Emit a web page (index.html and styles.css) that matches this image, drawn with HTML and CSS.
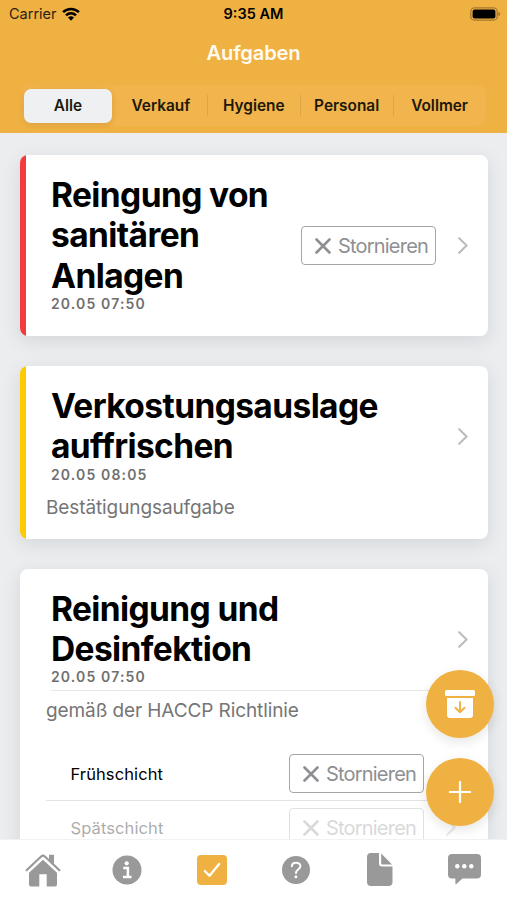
FILE: index.html
```html
<!DOCTYPE html>
<html lang="de">
<head>
<meta charset="UTF-8">
<meta name="viewport" content="width=device-width, initial-scale=1.0">
<title>Aufgaben</title>
<link rel="stylesheet" href="styles.css">
</head>
<body>
<!-- shared icons -->
<svg class="defs" width="0" height="0">
  <symbol id="cross" viewBox="0 0 16 16"><path d="M1.5 1.5L14.5 14.5M14.5 1.5L1.5 14.5" fill="none" stroke="currentColor" stroke-width="2.6" stroke-linecap="round"/></symbol>
  <symbol id="chevron" viewBox="0 0 10 17"><path d="M1.2 1.2L8.6 8.5L1.2 15.8" fill="none" stroke="currentColor" stroke-width="2.1" stroke-linecap="round" stroke-linejoin="round"/></symbol>
</svg>

<div class="app">
  <header class="header">
    <div class="status">
      <div class="carrier">Carrier
        <svg width="18" height="14" viewBox="0 0 18 14"><path d="M1.1 5.2a11.2 11.2 0 0 1 15.8 0M4 8.3a7.1 7.1 0 0 1 10 0" fill="none" stroke="#000" stroke-width="2.5"/><path d="M9 13.8l-3-3.2a4.3 4.3 0 0 1 6 0z"/></svg>
      </div>
      <div class="time">9:35 AM</div>
      <div class="battery">
        <svg width="31" height="14" viewBox="0 0 31 14"><rect x=".8" y=".8" width="26.4" height="12.4" rx="3.8" fill="none" stroke="#a67a2e" stroke-width="1.3"/><rect x="2.6" y="2.6" width="22.8" height="8.8" rx="2"/><path d="M28.4 4.8q2 .7 2 2.2t-2 2.2z" fill="#a67a2e"/></svg>
      </div>
    </div>
    <h1 class="title">Aufgaben</h1>
    <nav class="segments">
      <a class="segment active"><span>Alle</span></a>
      <a class="segment"><span>Verkauf</span></a>
      <a class="segment line"><span>Hygiene</span></a>
      <a class="segment line"><span>Personal</span></a>
      <a class="segment line"><span>Vollmer</span></a>
    </nav>
  </header>

  <main class="content">
    <article class="card red">
      <div class="head">
        <div class="label">
          <h2>Reingung von<br>sanitären<br>Anlagen</h2>
          <p class="date">20.05 07:50</p>
        </div>
        <button class="cancel"><svg width="16" height="16"><use href="#cross"/></svg><span>Stornieren</span></button>
        <svg class="chevron" width="10" height="17"><use href="#chevron"/></svg>
      </div>
    </article>

    <article class="card yellow">
      <div class="head">
        <div class="label">
          <h2>Verkostungsauslage<br>auffrischen</h2>
          <p class="date">20.05 08:05</p>
        </div>
        <svg class="chevron" width="10" height="17"><use href="#chevron"/></svg>
      </div>
      <p class="desc">Bestätigungsaufgabe</p>
    </article>

    <article class="card">
      <div class="head bordered">
        <div class="label">
          <h2>Reinigung und<br>Desinfektion</h2>
          <p class="date">20.05 07:50</p>
        </div>
        <svg class="chevron" width="10" height="17"><use href="#chevron"/></svg>
      </div>
      <p class="desc">gemäß der HACCP Richtlinie</p>
      <ul class="shifts">
        <li class="shift">
          <span class="name">Frühschicht</span>
          <button class="cancel"><svg width="16" height="16"><use href="#cross"/></svg><span>Stornieren</span></button>
          <svg class="chevron" width="10" height="17"><use href="#chevron"/></svg>
        </li>
        <li class="shift disabled">
          <span class="name">Spätschicht</span>
          <button class="cancel"><svg width="16" height="16"><use href="#cross"/></svg><span>Stornieren</span></button>
          <svg class="chevron" width="10" height="17"><use href="#chevron"/></svg>
        </li>
      </ul>
    </article>
  </main>

  <div class="fabs">
    <button class="fab">
      <svg width="30" height="28" viewBox="0 0 30 28" fill="#fff"><rect width="30" height="6" rx="1.5"/><path d="M2 8h26v17a3 3 0 0 1-3 3H5a3 3 0 0 1-3-3z"/><path d="M15 12v10.2M10.4 17.8L15 22.3L19.6 17.8" fill="none" stroke="#f0b143" stroke-width="1.9" stroke-linecap="round" stroke-linejoin="round"/></svg>
    </button>
    <button class="fab">
      <svg width="22" height="22" viewBox="0 0 22 22"><path d="M11 .8V21.2M.8 11H21.2" stroke="#fff" stroke-width="2.2" stroke-linecap="round"/></svg>
    </button>
  </div>

  <footer class="tabs">
    <a class="tab"><svg width="36" height="34" viewBox="0 0 36 34" fill="#999"><path d="M1.6 17.2L16.4 3.3Q18 1.9 19.6 3.3L34.4 17.2" fill="none" stroke="#999" stroke-width="2.2" stroke-linecap="round"/><path d="M24 1.8h5v9.4l-5-4.7z"/><path d="M18 6.8L32 19.7V31.5a2 2 0 0 1-2 2H21.7V21.3H14.3V33.5H6a2 2 0 0 1-2-2V19.7z"/></svg></a>
    <a class="tab"><svg width="30" height="30" viewBox="0 0 30 30"><circle cx="15" cy="15" r="14.5" fill="#999"/><circle cx="14.7" cy="8.3" r="2.1" fill="#fff"/><path d="M11.3 13.1H15.9V21.7M11 21.9H19.5" fill="none" stroke="#fff" stroke-width="2.5"/></svg></a>
    <a class="tab"><svg width="30" height="30" viewBox="0 0 30 30"><rect width="30" height="30" rx="4" fill="#f0b143"/><path d="M7.8 16L12.5 20.7L22.2 9" fill="none" stroke="#fff" stroke-width="2.3" stroke-linecap="round" stroke-linejoin="round"/></svg></a>
    <a class="tab"><svg width="28" height="28" viewBox="0 0 28 28"><circle cx="14" cy="14" r="14" fill="#999"/><path d="M9.8 10.2C10 7.7 11.8 6.7 14 6.7C16.5 6.7 18.4 8.1 18.4 10.3C18.4 13.3 14 13.2 14 17" fill="none" stroke="#fff" stroke-width="2" stroke-linecap="round"/><circle cx="13.9" cy="20.8" r="1.5" fill="#fff"/></svg></a>
    <a class="tab"><svg width="26" height="33" viewBox="0 0 26 33" fill="#999"><path d="M4 0H12V10.5a3 3 0 0 0 3 3H25.5V29a4 4 0 0 1-4 4H4a4 4 0 0 1-4-4V4a4 4 0 0 1 4-4z"/><path d="M14.2 .5L25 11.5H15.4a1.2 1.2 0 0 1-1.2-1.2z"/></svg></a>
    <a class="tab"><svg width="33" height="31" viewBox="0 0 33 31"><path d="M4 0H29a4 4 0 0 1 4 4V20.5a4 4 0 0 1-4 4H14.5L8 30.2Q7.4 30.6 7.4 29.9V24.5H4a4 4 0 0 1-4-4V4a4 4 0 0 1 4-4z" fill="#999"/><g fill="#fff"><circle cx="9.3" cy="12.3" r="2.2"/><circle cx="16.3" cy="12.3" r="2.2"/><circle cx="23.3" cy="12.3" r="2.2"/></g></svg></a>
  </footer>
</div>
</body>
</html>
```
FILE: styles.css
```css
* {
  box-sizing: border-box;
}
body {
  margin: 0;
  font-family: Inter, "Liberation Sans", sans-serif;
  color: #000;
}
h1, h2, p, ul {
  margin: 0;
  padding: 0;
}
svg {
  display: block;
  flex: none;
}
button {
  font-family: inherit;
  padding: 0;
}
.defs {
  position: absolute;
}
.app {
  position: relative;
  display: flex;
  flex-direction: column;
  width: 507px;
  height: 900px;
  overflow: hidden;
  background: #ebedef;
}

/* header */
.header {
  flex: none;
  height: 133px;
  background: #f0b143;
}
.status {
  display: flex;
  align-items: center;
  height: 27px;
  padding: 0 6px 0 9px;
  font-size: 14.5px;
}
.carrier, .battery {
  flex: 1;
  display: flex;
  align-items: center;
  gap: 5px;
}
.carrier {
  color: #2b2112;
}
.battery {
  justify-content: flex-end;
}
.time {
  margin-left: -3px;
  font-weight: 600;
}
.title {
  height: 50px;
  line-height: 51px;
  text-align: center;
  font-size: 20.2px;
  font-weight: 600;
  letter-spacing: -.2px;
  color: #fffaf0;
}
.segments {
  display: flex;
  height: 41px;
  margin: 8px 21px 0 21.5px;
  border-radius: 8px;
  background: #f2b44c;
}
.segment {
  flex: 1;
  display: flex;
  padding: 4px 2.5px 3px;
  font-size: 15.4px;
  font-weight: 600;
  color: #20180a;
}
.segment span {
  flex: 1;
  line-height: 33px;
  text-align: center;
}
.segment.line {
  background: linear-gradient(#dda344, #dda344) 0 10px / 1px 21px no-repeat;
}
.segment.active span {
  border-radius: 7px;
  background: #eff0f1;
  box-shadow: 0 2px 6px rgba(120, 80, 0, .2);
}

/* task cards */
.content {
  flex: 1;
  min-height: 0;
  overflow: hidden;
  display: flex;
  flex-direction: column;
  gap: 29.5px;
  padding: 22px 19.5px 0 20.4px;
}
.card {
  flex: none;
  padding: 20px 19.5px 19.5px 25.6px;
  border-radius: 8px;
  background: #fff;
  box-shadow: 0 5px 18px rgba(60, 70, 80, .13);
}
.red {
  background: linear-gradient(90deg, #f33b3f 6.5px, #fff 6.5px);
}
.yellow {
  background: linear-gradient(90deg, #fdcb00 6.5px, #fff 6.5px);
}
.head {
  display: flex;
  align-items: center;
  margin-left: 5px;
}
.bordered {
  margin-right: -19.5px;
  padding-right: 19.5px;
  border-bottom: 1px solid #e8e8e8;
}
.label {
  flex: 1;
  padding-bottom: 5px;
}
.label h2 {
  font-size: 33.5px;
  line-height: 40.33px;
  font-weight: 700;
  letter-spacing: -.6px;
  white-space: nowrap;
}
.date {
  height: 17px;
  margin-top: -1px;
  line-height: 17px;
  font-size: 14px;
  font-weight: 600;
  letter-spacing: 1.15px;
  color: #707070;
}
.desc {
  height: 25px;
  margin-top: 7px;
  line-height: 25px;
  font-size: 19px;
  letter-spacing: -.1px;
  color: #757575;
}
.cancel {
  display: flex;
  align-items: center;
  gap: 7px;
  width: 135px;
  height: 39px;
  padding-left: 13px;
  border: 1.5px solid #a5a6a8;
  border-radius: 4px;
  background: #fff;
  color: #8e8f92;
  font-size: 20px;
  letter-spacing: -.8px;
}
.chevron {
  margin-left: 22px;
  color: #bcbcbe;
}
.shifts {
  margin-top: 24px;
  list-style: none;
}
.shift {
  display: flex;
  align-items: center;
  height: 54px;
  margin-right: -19.5px;
  padding: 0 31.5px 0 24.5px;
  border-bottom: 1px solid #e4e4e4;
}
.name {
  flex: 1;
  font-size: 16.5px;
  letter-spacing: .1px;
}
.disabled > * {
  opacity: .33;
}

/* floating buttons */
.fabs {
  position: absolute;
  top: 670px;
  right: 12.6px;
  display: flex;
  flex-direction: column;
  gap: 20px;
}
.fab {
  display: flex;
  align-items: center;
  justify-content: center;
  width: 68px;
  height: 68px;
  border: 0;
  border-radius: 50%;
  background: #f0b143;
  box-shadow: 0 4px 12px rgba(0, 0, 0, .1);
}

/* bottom tabs */
.tabs {
  flex: none;
  display: flex;
  height: 61.5px;
  padding-left: 1px;
  background: #fff;
  border-top: 1px solid #f2f2f2;
}
.tab {
  flex: 1;
  display: flex;
  align-items: center;
  justify-content: center;
}
```
